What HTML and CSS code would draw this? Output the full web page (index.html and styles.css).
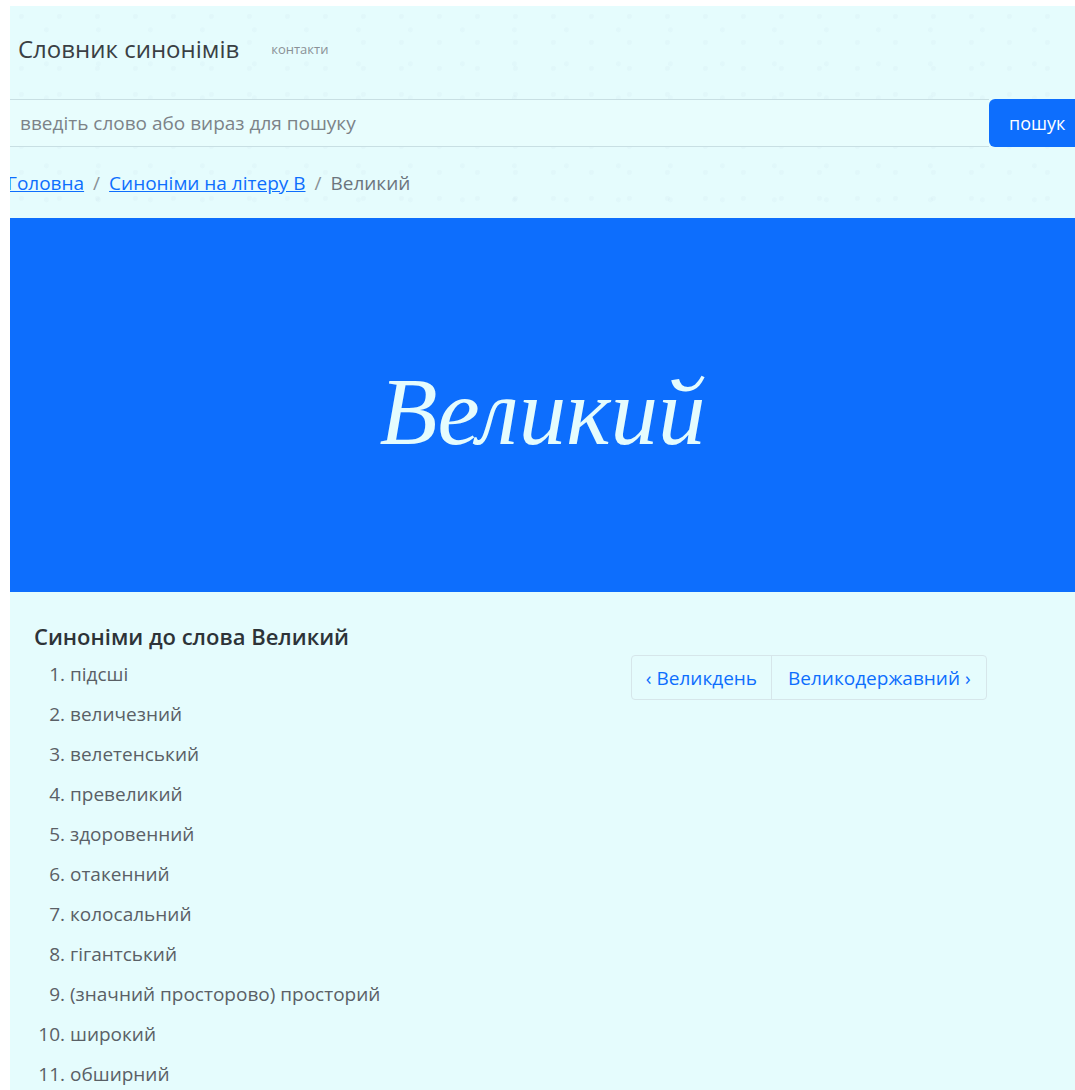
FILE: index.html
```html
<!DOCTYPE html>
<html lang="uk">
<head>
<meta charset="utf-8">
<title>Великий — Словник синонімів</title>
<link rel="stylesheet" href="styles.css">
</head>
<body>
<div class="page">
  <header class="top">
    <nav class="navbar">
      <a class="brand" href="#">Словник синонімів</a>
      <a class="nav-link" href="#">контакти</a>
    </nav>
    <form class="search">
      <input class="search-input" type="text" placeholder="введіть слово або вираз для пошуку">
      <button class="search-btn" type="button">пошук</button>
    </form>
    <div class="crumbs">
      <a href="#">Головна</a><span class="sep">/</span><a href="#">Синоніми на літеру В</a><span class="sep">/</span><span class="current">Великий</span>
    </div>
  </header>

  <section class="hero">
    <h1 class="hero-title">Великий</h1>
  </section>

  <main class="content">
    <div class="col-list">
      <h2 class="list-title">Синоніми до слова Великий</h2>
      <ol class="syn-list">
        <li>підсші</li>
        <li>величезний</li>
        <li>велетенський</li>
        <li>превеликий</li>
        <li>здоровенний</li>
        <li>отакенний</li>
        <li>колосальний</li>
        <li>гігантський</li>
        <li>(значний просторово) просторий</li>
        <li>широкий</li>
        <li>обширний</li>
      </ol>
    </div>
    <div class="col-nav">
      <div class="pager">
        <a class="pager-item" href="#">‹ Великдень</a>
        <a class="pager-item" href="#">Великодержавний ›</a>
      </div>
    </div>
  </main>
</div>
</body>
</html>
```

FILE: styles.css
```css
html, body {
  margin: 0;
  padding: 0;
  background: #ffffff;
}

body {
  font-family: "Open Sans", "Noto Sans", sans-serif;
  color: #555b61;
}

.page {
  margin: 6px 0 0 10px;
  background: #e5fcfd;
  overflow: hidden;
  min-height: 1084px;
}

/* header area with a faint speckled texture */
.top {
  background-image:
    radial-gradient(circle at 30% 40%, rgba(150, 175, 200, 0.06) 0 2px, transparent 3px),
    radial-gradient(circle at 70% 70%, rgba(150, 175, 200, 0.05) 0 2px, transparent 3px);
  background-size: 38px 26px, 52px 34px;
}

.navbar {
  height: 85px;
  padding-bottom: 8px;
  display: flex;
  align-items: center;
  gap: 32px;
  padding-left: 8px;
}

.brand {
  font-size: 24px;
  color: #3a3f44;
  text-decoration: none;
}

.nav-link {
  font-size: 13px;
  color: #8a9196;
  text-decoration: none;
}

.search {
  display: flex;
  height: 48px;
  margin: 0;
}

.search-input {
  flex: 1;
  min-width: 0;
  height: 48px;
  box-sizing: border-box;
  border: none;
  border-top: 1px solid #c8dfe3;
  border-bottom: 1px solid #c8dfe3;
  background: #e8fdfd;
  padding: 0 10px;
  font-family: "Open Sans", "Noto Sans", sans-serif;
  font-size: 19px;
  color: #555;
  outline: none;
}

.search-input::placeholder {
  color: #7c8388;
}

.search-btn {
  width: 92px;
  flex: none;
  margin-right: -6px;
  height: 48px;
  border: none;
  border-radius: 6px;
  background: #0d6efd;
  color: #ffffff;
  font-family: "Open Sans", "Noto Sans", sans-serif;
  font-size: 18px;
  text-align: left;
  padding-left: 20px;
}

.crumbs {
  height: 71px;
  display: flex;
  align-items: center;
  margin-left: -3px;
  font-size: 19px;
  color: #6c757d;
}

.crumbs a {
  color: #0d6efd;
  text-decoration: underline;
}

.crumbs .sep {
  padding: 0 9px;
  color: #8a9196;
}

.crumbs .current {
  color: #6c757d;
}

.hero {
  height: 374px;
  background: #0d6efd;
  display: flex;
  align-items: center;
  justify-content: center;
}

.hero-title {
  margin: 14px 0 0 0;
  font-family: "Liberation Serif", "DejaVu Serif", serif;
  font-style: italic;
  font-weight: normal;
  font-size: 95px;
  color: #e5fcfd;
}

.content {
  display: grid;
  grid-template-columns: 1fr 1fr;
}

.col-list {
  padding-left: 24px;
}

.list-title {
  margin: 30px 0 4px 0;
  font-size: 22px;
  font-weight: 600;
  line-height: 28px;
  color: #2d3338;
}

.syn-list {
  margin: 0;
  padding-left: 36px;
  font-size: 19px;
  line-height: 40px;
  color: #5a6066;
}

.col-nav {
  display: flex;
  justify-content: center;
  align-items: flex-start;
}

.pager {
  margin-top: 63px;
  display: flex;
  border: 1px solid #d6e6ea;
  border-radius: 4px;
}

.pager-item {
  height: 43px;
  display: flex;
  align-items: center;
  padding: 0 14px;
  font-size: 19px;
  color: #0d6efd;
  text-decoration: none;
}

.pager-item + .pager-item {
  border-left: 1px solid #d6e6ea;
  padding: 0 15px 0 16px;
}
```
